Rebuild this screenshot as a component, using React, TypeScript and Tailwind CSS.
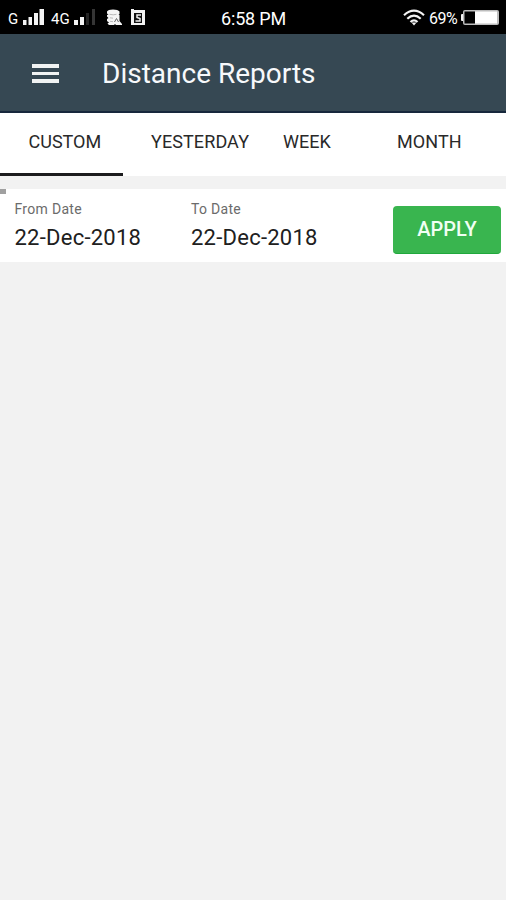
import React from 'react';

interface Tab {
  label: string;
  className: string;
}

interface DateFieldProps {
  label: string;
  value: string;
}

const tabs: Tab[] = [
  { label: 'CUSTOM', className: 'w-[122.5px] pl-[28.5px] border-b-[3px] border-[#1c1c1e]' },
  { label: 'YESTERDAY', className: 'w-[131.5px] pl-[28.5px] tracking-[0.1px]' },
  { label: 'WEEK', className: 'w-[104px] pl-[29px]' },
  { label: 'MONTH', className: 'w-[148px] pl-[39px] tracking-[0.1px]' },
];

const StatusBar: React.FC = () => (
  <div className="grid h-[34px] grid-cols-3 items-center bg-black text-white">
    <div className="flex items-center pl-[8px]">
      <span className="w-[15px] pt-[5px] text-[15px] leading-none">G</span>
      <svg width="22" height="18" viewBox="0 0 22 18" fill="#f4f4f4">
        <rect x="0" y="12" width="3.5" height="5" />
        <rect x="5.5" y="9" width="3.5" height="8" />
        <rect x="11" y="5" width="4" height="12" />
        <rect x="16.5" y="1" width="4.5" height="16" />
      </svg>
      <span className="ml-[6px] w-[23px] pt-[5px] text-[15px] leading-none">4G</span>
      <svg width="22" height="18" viewBox="0 0 22 18" fill="#f4f4f4">
        <rect x="0" y="12" width="4" height="5" />
        <rect x="6" y="9" width="4" height="8" />
        <rect x="12" y="5" width="3" height="12" fill="#252525" />
        <rect x="18" y="1" width="3" height="16" fill="#353535" />
      </svg>
      {/* Database notification */}
      <svg className="ml-[10px] shrink-0" width="17" height="18" viewBox="0 0 17 18">
        <path
          d="M1 3.500Q2 1.500 7 1.500T13.500 3.500V6l-1 .5 1 .5v6l2.500 3v1h-6l-1-1-1 1H3L1.500 15.500 3 14.500 1 13v-2l1.500-1L1 8.500V7l1.500-.5L1 5.500Z"
          fill="#f4f4f4"
        />
        <path d="M3.500 6.300q4 1 7 0M4 9.800l3 .4M4 13.300l3 .4" fill="none" stroke="#aaa" strokeWidth=".8" />
        <path d="M8.500 14l2-3.500 2 3.500" fill="none" stroke="#666" strokeWidth="1" />
      </svg>
      {/* Document notification */}
      <svg className="ml-[8px] shrink-0" width="15" height="17" viewBox="0 0 15 17">
        <path d="M0 0h3v1h11v15H0Z" fill="#f4f4f4" />
        <path d="M3 4h8v10H3Z" fill="#111" />
        <path d="M10 6H6v2.500l3 1V12H4.500" fill="none" stroke="#eee" strokeWidth="1.500" />
      </svg>
    </div>
    <span className="pl-[1px] pt-[3px] text-center text-[18px] leading-none tracking-[-0.2px]">6:58 PM</span>
    <div className="flex items-center justify-end pr-[7px]">
      <svg width="22" height="17" viewBox="0 0 22 17" fill="none" stroke="#f4f4f4" strokeWidth="2.2">
        <path d="M1 6.200Q11-2.800 21 6.200M4.300 9.700Q11 3.500 17.700 9.700M7.500 13Q11 9.600 14.500 13" />
        <path d="M8.500 13.500h5L11 16.500Z" fill="#f4f4f4" stroke="none" />
      </svg>
      <span className="ml-[4px] mr-[3px] w-[29px] pt-[3px] text-[16px] leading-none tracking-[-0.5px]">69%</span>
      <svg width="38" height="17" viewBox="0 0 38 17">
        <rect x="0" y="5" width="3" height="7" rx="1" fill="#f4f4f4" />
        <rect x="2" y="1" width="36" height="15" rx="2" fill="#bdbdbd" />
        <rect x="3.500" y="2.500" width="10.500" height="12" fill="#000" />
        <rect x="14" y="2.500" width="22" height="12" fill="#fff" />
      </svg>
    </div>
  </div>
);

const DateField: React.FC<DateFieldProps> = ({ label, value }) => (
  <div className="w-[176.5px] pt-[12px]">
    <div className="text-[14px] leading-[16px] tracking-[0.3px] text-[#6b6b6b]">{label}</div>
    <div className="mt-[8px] text-[22px] leading-[26px] tracking-[0.25px] text-[#202020]">{value}</div>
  </div>
);

const App: React.FC = () => (
  <div className="min-h-screen w-[506px] overflow-hidden bg-[#f2f2f2] font-['Roboto',sans-serif]">
    <StatusBar />

    {/* Header */}
    <header className="flex h-[79px] items-center border-b-2 border-[#17283c] bg-[#364853] pl-[32px] pt-[3px]">
      <button aria-label="Open menu" className="mb-px flex w-[27px] flex-col gap-[4px]">
        <span className="h-[4px] bg-[#f1f3f3]" />
        <span className="h-[3px] bg-[#f1f3f3]" />
        <span className="h-[4px] bg-[#f1f3f3]" />
      </button>
      <h1 className="ml-[43px] text-[28px] leading-none text-[#f7f9fb]">Distance Reports</h1>
    </header>

    {/* Tabs */}
    <nav className="flex h-[63px] bg-white">
      {tabs.map((tab) => (
        <button
          key={tab.label}
          className={`flex h-full items-start pt-[18px] text-left text-[18px] leading-[22px] text-[#292929] ${tab.className}`}
        >
          {tab.label}
        </button>
      ))}
    </nav>

    {/* Date range */}
    <section className="relative mt-[13px] flex h-[73px] bg-white pl-[14.5px]">
      <span className="absolute left-0 top-0 h-[5px] w-[6px] bg-[#a0a0a0]" />
      <DateField label="From Date" value="22-Dec-2018" />
      <DateField label="To Date" value="22-Dec-2018" />
      <button className="ml-auto mr-[5px] mt-[17px] h-[48px] w-[108px] rounded-[4px] border-b border-[#20a83c] bg-[#39b54f] pb-[2px] text-[20px] font-medium text-[#f1fff3]">
        APPLY
      </button>
    </section>
  </div>
);

export default App;
